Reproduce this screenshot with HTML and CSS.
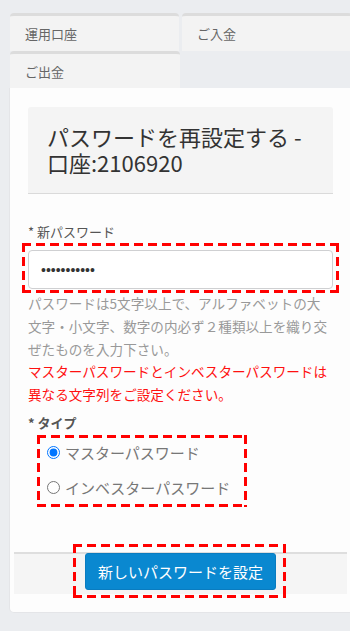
FILE: index.html
```html
<!DOCTYPE html>
<html lang="ja">
<head>
  <meta charset="UTF-8" />
  <title>パスワードを再設定する</title>
  <link rel="stylesheet" href="styles.css">
</head>
<body>

<div class="page">
  <div class="tabs">
    <div class="tab">運用口座</div>
    <div class="tab">ご入金</div>
    <div class="tab">ご出金</div>
  </div>

  <div class="card">
    <div class="card-head">パスワードを再設定する - 口座:2106920</div>

    <div class="form-group">
      <label class="label" for="new-pass">* 新パスワード</label>
      <div class="mark-box dash">
        <input class="input" id="new-pass" type="password" value="12345678901">
      </div>
      <div class="help">パスワードは5文字以上で、アルファベットの大文字・小文字、数字の内必ず２種類以上を織り交ぜたものを入力下さい。</div>
      <div class="help warn">マスターパスワードとインベスターパスワードは異なる文字列をご設定ください。</div>
    </div>

    <div class="form-group tight">
      <div class="label strong">* タイプ</div>
      <div class="radios dash">
        <label class="radio"><input type="radio" name="type" checked> マスターパスワード</label>
        <label class="radio"><input type="radio" name="type"> インベスターパスワード</label>
      </div>
    </div>

    <div class="card-foot">
      <span class="btn-wrap">
        <button class="btn">新しいパスワードを設定</button>
      </span>
    </div>
  </div>
</div>

</body>
</html>
```

FILE: styles.css
```css
* {
  box-sizing: border-box;
}

html, body {
  margin: 0;
  padding: 0;
  background: #ebedf0;
  font-family: "Noto Sans CJK JP", "Noto Sans", sans-serif;
  overflow: hidden;
}

.page {
  width: 343px;
  margin-left: 9px;
  padding-top: 13px;
}

.tabs {
  display: grid;
  grid-template-columns: 169px 1fr;
  column-gap: 3px;
  margin-left: 1px;
}

.tab {
  height: 38px;
  padding-left: 15px;
  display: flex;
  align-items: center;
  font-size: 13px;
  color: #666;
  background: #f3f3f3;
  border-top: 3px solid #dcdcdc;
  border-radius: 4px 4px 0 0;
}

.tab:nth-child(3) {
  height: 37px;
  width: 170px;
}

.card {
  background: #fdfdfd;
  border: 1px solid #e4e5e8;
  border-top: none;
  border-radius: 0 0 0 5px;
  padding: 19px 0 18px;
}

.card-head {
  margin: 0 18px;
  padding: 16px 19px 18px;
  background: #f4f4f4;
  border-bottom: 1px solid #dadada;
  border-radius: 3px 3px 0 0;
  font-size: 22px;
  line-height: 26px;
  color: #333;
}

.form-group {
  margin: 0 18px;
  padding-top: 29px;
}

.form-group.tight {
  padding-top: 8px;
}

.label {
  display: block;
  font-size: 13px;
  line-height: 18px;
  color: #555;
  margin-bottom: 2px;
}

.label.strong {
  font-weight: bold;
  margin-bottom: 3px;
}

/* red dashed annotation frame, 3px thick, 9px dash / 5px gap */
.dash {
  background-image:
    repeating-linear-gradient(90deg, #ff0000 0 9px, transparent 9px 14px),
    repeating-linear-gradient(90deg, #ff0000 0 9px, transparent 9px 14px),
    repeating-linear-gradient(180deg, #ff0000 0 9px, transparent 9px 14px),
    repeating-linear-gradient(180deg, #ff0000 0 9px, transparent 9px 14px);
  background-size: 100% 3px, 100% 3px, 3px 100%, 3px 100%;
  background-position: left top, left bottom, left top, right top;
  background-repeat: no-repeat;
}

.mark-box {
  margin: 0 -6px;
  padding: 7px 6px 4px;
}

.input {
  display: block;
  width: 100%;
  height: 39px;
  padding: 0 12px;
  border: 1px solid #cfd0d2;
  border-radius: 4px;
  background: #fff;
  font-size: 14px;
  color: #333;
}

.help {
  margin-top: -1px;
  font-size: 13.6px;
  line-height: 22.8px;
  color: #999;
}

.help.warn {
  margin-top: 0;
  color: #ff1010;
}

.radios {
  display: inline-flex;
  flex-direction: column;
  gap: 11px;
  margin-left: 9px;
  padding: 6px 17px 7px 10px;
}

.radio {
  display: flex;
  align-items: center;
  gap: 5px;
  height: 24px;
  font-size: 15px;
  color: #777;
}

.radio input {
  margin: 0;
  width: 13px;
  height: 13px;
}

.card-foot {
  margin: 45px 4px 0;
  border-top: 2px solid #dedede;
  background: #f5f5f5;
  display: flex;
  justify-content: center;
  padding-bottom: 4px;
}

.btn-wrap {
  position: relative;
  margin-top: -1px;
}

.btn-wrap::after {
  content: "";
  position: absolute;
  top: -9px;
  bottom: -8px;
  left: -12px;
  right: -10px;
  pointer-events: none;
  background-image:
    repeating-linear-gradient(90deg, #ff0000 0 9px, transparent 9px 14px),
    repeating-linear-gradient(90deg, #ff0000 0 9px, transparent 9px 14px),
    repeating-linear-gradient(180deg, #ff0000 0 9px, transparent 9px 14px),
    repeating-linear-gradient(180deg, #ff0000 0 9px, transparent 9px 14px);
  background-size: 100% 3px, 100% 3px, 3px 100%, 3px 100%;
  background-position: left top, left bottom, left top, right top;
  background-repeat: no-repeat;
}

.btn {
  display: block;
  height: 37px;
  padding: 0 12px;
  border: 1px solid #0a7cc0;
  border-radius: 3px;
  background: #0a88d0;
  color: #fff;
  font-family: inherit;
  font-size: 15px;
}
```
